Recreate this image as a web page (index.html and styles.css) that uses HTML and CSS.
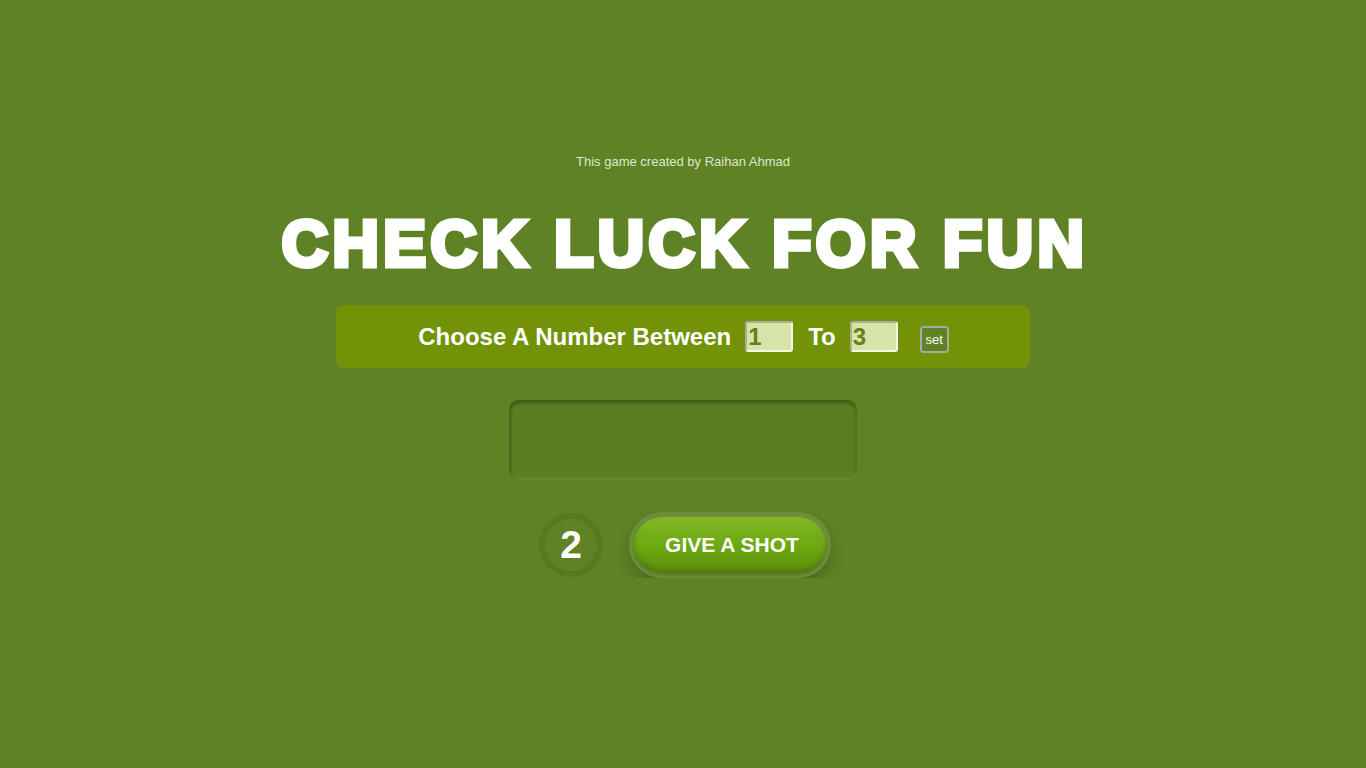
FILE: index.html
```html
<!DOCTYPE html>
<html>
<head>
<meta charset="utf-8">
<link rel="stylesheet" href="styles.css">
</head>
<body>
<main class="game">
  <p class="credit">This game created by Raihan Ahmad</p>
  <h1 class="title">CHECK LUCK FOR FUN</h1>
  <div class="range">
    <span class="label">Choose A Number Between</span>
    <input class="num" type="text" value="1">
    <span class="label">To</span>
    <input class="num" type="text" value="3">
    <button class="set">set</button>
  </div>
  <div class="result"></div>
  <div class="actions">
    <div class="count">2</div>
    <div class="ring"><button class="shot">GIVE A SHOT</button></div>
  </div>
</main>
</body>
</html>
```
FILE: styles.css
```css
html, body {
  margin: 0;
  padding: 0;
  background: #5e8224;
  font-family: "Liberation Sans", Arial, sans-serif;
}
.game {
  display: flex;
  flex-direction: column;
  align-items: center;
  padding-top: 155px;
}
.credit {
  margin: 0;
  font-size: 13px;
  line-height: 14px;
  color: #dfe6d2;
}
.title {
  margin: 37px 0 0 4px;
  font-size: 64px;
  line-height: 76px;
  font-weight: 700;
  color: #fff;
  -webkit-text-stroke: 5px #fff;
  letter-spacing: 4.5px;
}
.range {
  margin-top: 23px;
  width: 694px;
  height: 63px;
  box-sizing: border-box;
  background: #729207;
  border-radius: 8px;
  display: flex;
  align-items: center;
  justify-content: center;
  padding-left: 1px;
}
.label {
  color: #fff;
  font-weight: 700;
  font-size: 24px;
}
.num {
  width: 48px;
  height: 31px;
  box-sizing: border-box;
  margin: 0 15px 0 14px;
  border: 2px solid #f4f7ea;
  border-top-color: #a9b09a;
  border-left-color: #a9b09a;
  border-radius: 3px;
  background: #d6e4a8;
  color: #5e8224;
  font-family: "Liberation Sans", Arial, sans-serif;
  font-weight: 700;
  font-size: 24px;
  padding: 0 0 0 1px;
  outline: none;
}
.set {
  margin-left: 7px;
  margin-top: 6px;
  width: 29px;
  height: 27px;
  box-sizing: border-box;
  background: #5e8224;
  border: 2px solid #a8ab9e;
  border-radius: 4px;
  color: #fff;
  font-family: "Liberation Sans", Arial, sans-serif;
  font-size: 13px;
  padding: 0;
}
.result {
  margin-top: 32px;
  width: 348px;
  height: 80px;
  border-radius: 10px;
  background: #5a7e22;
  box-shadow: inset 0 3px 4px rgba(0,0,0,0.3), inset 0 -2px 2px rgba(255,255,255,0.12), inset 2px 0 3px rgba(0,0,0,0.12);
}
.actions {
  margin-top: 32px;
  display: flex;
  align-items: center;
  gap: 26px;
  padding-left: 4px;
}
.count {
  width: 64px;
  height: 64px;
  box-sizing: border-box;
  border: 6px solid #567a1f;
  border-radius: 50%;
  display: flex;
  align-items: center;
  justify-content: center;
  color: #fff;
  font-weight: 700;
  font-size: 39px;
}
.ring {
  width: 202px;
  height: 66px;
  box-sizing: border-box;
  padding: 5px;
  border-radius: 33px;
  background: rgba(255,255,255,0.1);
  box-shadow: 0 8px 14px rgba(0,0,0,0.18);
}
.shot {
  width: 100%;
  height: 100%;
  border: none;
  border-radius: 28px;
  background: linear-gradient(#82b626 0%, #6fab12 45%, #5e900c 100%);
  box-shadow: inset 0 -4px 4px rgba(0,0,0,0.15), 0 2px 3px rgba(0,0,0,0.2);
  color: #fff;
  font-family: "Liberation Sans", Arial, sans-serif;
  font-weight: 700;
  font-size: 21px;
  padding: 0 0 0 4px;
}
```
